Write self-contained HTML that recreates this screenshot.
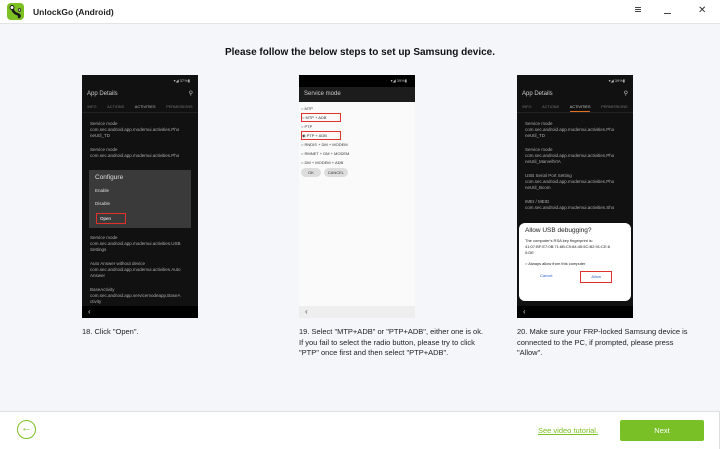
<!DOCTYPE html>
<html><head><meta charset="utf-8"><style>
*{margin:0;padding:0;box-sizing:border-box}
body{width:720px;height:449px;overflow:hidden;font-family:"Liberation Sans",sans-serif;background:#f5f6fa;position:relative}
.hdr{position:absolute;left:0;top:0;width:720px;height:24px;background:#fff;border-bottom:1px solid #e3e4e8}
.ftr{position:absolute;left:0;top:411px;width:720px;height:38px;background:#fff;border-top:1px solid #e0e0e0;border-right:1px solid #ddd}
.title{position:absolute;top:47px;left:0;width:720px;text-align:center;font-weight:bold;font-size:10px;color:#111}
.ph{position:absolute;top:75px;width:116px;height:243px;overflow:hidden;font-size:4.5px;color:#aaa}
.dark{background:#111}
.cap{position:absolute;top:327px;font-size:7.5px;line-height:10.5px;color:#222}
.sb{height:12px;text-align:right;padding-right:8px;font-size:4px;line-height:12px;color:#bbb}
.ab{height:14px;padding-left:5px;font-size:6px;line-height:14px;color:#ccc}
.tabs{height:12px;display:flex;justify-content:space-around;font-size:3.8px;color:#777;line-height:12px;border-bottom:1px solid #222}
.it{padding:4px 8px;line-height:6px}
.nav{position:absolute;bottom:0;left:0;right:0;height:12px;background:#000;color:#ccc;font-size:8px;padding-left:6px;line-height:12px}
.red{border:1px solid #e0312a}
</style></head><body>
<div class="hdr">
<svg style="position:absolute;left:7px;top:3px" width="17" height="17" viewBox="0 0 17 17"><rect width="17" height="17" rx="4" fill="#7cc021"/><path d="M5 5c1 3 2 5 5 6s3 2 2 3" stroke="#1a1a1a" stroke-width="2.6" fill="none" stroke-linecap="round"/><circle cx="5" cy="4.5" r="2" fill="#fff" stroke="#1a1a1a"/><circle cx="12.5" cy="7" r="1.3" fill="#fff" stroke="#1a1a1a" stroke-width=".8"/></svg>
<div style="position:absolute;left:33px;top:7px;font-size:8.5px;font-weight:bold;color:#222">UnlockGo (Android)</div>
<div style="position:absolute;left:635px;top:7px;width:6px;height:1.2px;background:#444;box-shadow:0 2px 0 #444,0 4px 0 #444"></div>
<div style="position:absolute;left:664px;top:13px;width:7px;height:1.2px;background:#444"></div>
<div style="position:absolute;left:698px;top:5px;font-size:10px;color:#333">✕</div>
</div>
<div class="title">Please follow the below steps to set up Samsung device.</div>

<div class="ph dark" style="left:82px">
<div class="sb">▾◢ 37%▮</div>
<div class="ab">App Details<span style="float:right;padding-right:5px">⚲</span></div>
<div class="tabs"><span>INFO</span><span>ACTIONS</span><span style="color:#bbb">ACTIVITIES</span><span>PERMISSIONS</span></div>
<div class="it" style="margin-top:4px">Service mode<br>com.sec.android.app.modemui.activities.Pho<br>neUtil_TD</div>
<div class="it">Service mode<br>com.sec.android.app.modemui.activities.Pho</div>
<div style="position:absolute;left:7px;top:95px;width:102px;height:58px;background:#3a3a3a;color:#ddd;font-size:4.5px">
<div style="padding:4px 6px;font-size:6.5px">Configure</div>
<div style="padding:3px 6px">Enable</div><div style="padding:5px 6px">Disable</div>
<div class="red" style="margin:2px 0 0 7px;width:30px;padding:2px 3px;color:#fff">Open</div></div>
<div class="it" style="margin-top:68px">Service mode<br>com.sec.android.app.modemui.activities.USB<br>Settings</div>
<div class="it">Auto Answer without device<br>com.sec.android.app.modemui.activities.Auto<br>Answer</div>
<div class="it">BaseActivity<br>com.sec.android.app.servicemodeapp.BaseA<br>ctivity</div>
<div class="nav">‹</div></div>

<div class="ph" style="left:299px;background:#fafafa;color:#333">
<div class="sb" style="background:#000">▾◢ 39%▮</div>
<div class="ab" style="background:#1c1c1c;height:15px">Service mode</div>
<div style="padding:2px 2px;font-size:4px;line-height:9px">
<div>○ MTP</div><div class="red" style="width:40px;line-height:7px">○ MTP + ADB</div><div>○ PTP</div>
<div class="red" style="width:40px;line-height:7px">◉ PTP + ADB</div><div>○ RNDIS + DM + MODEM</div><div>○ RMNET + DM + MODEM</div><div>○ DM + MODEM + ADB</div>
<div style="display:flex;gap:3px;margin-top:1px"><span style="background:#ddd;border-radius:5px;padding:0 7px">OK</span><span style="background:#ddd;border-radius:5px;padding:0 4px">CANCEL</span></div></div>
<div class="nav" style="background:#eee;color:#555">‹</div></div>

<div class="ph dark" style="left:517px">
<div class="sb">▾◢ 39%▮</div>
<div class="ab">App Details<span style="float:right;padding-right:5px">⚲</span></div>
<div class="tabs"><span>INFO</span><span>ACTIONS</span><span style="color:#ccc;border-bottom:1px solid #e07020">ACTIVITIES</span><span>PERMISSIONS</span></div>
<div class="it" style="margin-top:4px">Service mode<br>com.sec.android.app.modemui.activities.Pho<br>neUtil_TD</div>
<div class="it">Service mode<br>com.sec.android.app.modemui.activities.Pho<br>neUtil_MarvellVIA</div>
<div class="it">USB Serial Port Setting<br>com.sec.android.app.modemui.activities.Pho<br>neUtil_Bcom</div>
<div class="it">IMEI / MEID<br>com.sec.android.app.modemui.activities.Sho</div>
<div style="position:absolute;left:2px;top:148px;width:112px;height:78px;background:#fff;border-radius:6px;color:#222;font-size:4px;padding:5px 6px;line-height:6px">
<div style="font-size:6.5px;margin-bottom:4px">Allow USB debugging?</div>
The computer's RSA key fingerprint is:<br>41:07:BF:E7:0B:71:6B:C9:84:45:5C:B2:91:CE:6<br>0:DE
<div style="margin-top:5px">○ Always allow from this computer</div>
<div style="display:flex;justify-content:space-around;margin-top:4px;color:#2a64c0"><span style="padding:2px">Cancel</span><span class="red" style="padding:2px 10px">Allow</span></div></div>
<div class="nav">‹</div></div>

<div class="cap" style="left:82px">18. Click "Open".</div>
<div class="cap" style="left:299px;width:190px">19. Select "MTP+ADB" or "PTP+ADB", either one is ok. If you fail to select the radio button, please try to click "PTP" once first and then select "PTP+ADB".</div>
<div class="cap" style="left:517px;width:180px">20. Make sure your FRP-locked Samsung device is connected to the PC, if prompted, please press "Allow".</div>

<div class="ftr">
<div style="position:absolute;left:17px;top:8px;width:19px;height:19px;border:1.5px solid #7cc021;border-radius:50%;color:#7cc021;font-size:11px;line-height:15px;text-align:center">←</div>
<div style="position:absolute;left:538px;top:14px;font-size:7.5px;color:#7cc021;text-decoration:underline">See video tutorial.</div>
<div style="position:absolute;left:620px;top:8px;width:84px;height:21px;background:#78c025;border-radius:2px;color:#fff;font-size:7.5px;text-align:center;line-height:21px">Next</div>
</div>
</body></html>
